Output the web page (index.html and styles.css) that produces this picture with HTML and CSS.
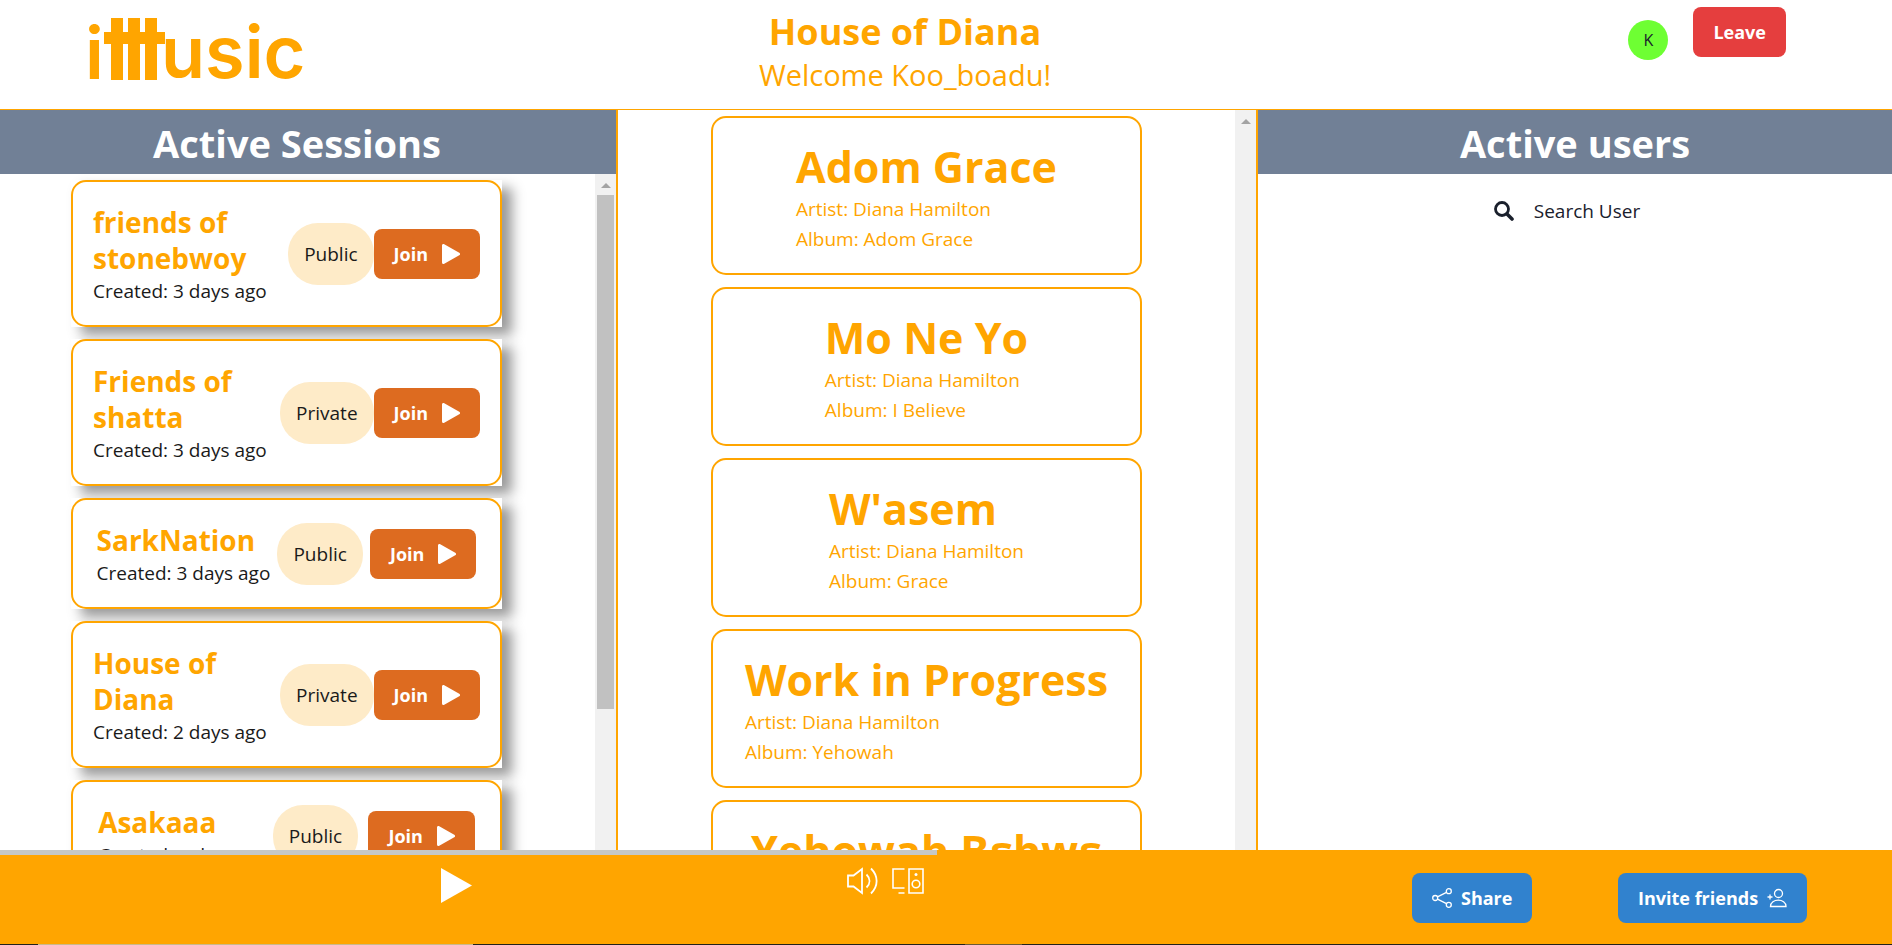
FILE: index.html
```html
<!DOCTYPE html>
<html lang="en">
<head>
<meta charset="utf-8">
<title>ittMusic - House of Diana</title>
<link rel="stylesheet" href="styles.css">
</head>
<body>
<svg class="symbols" aria-hidden="true">
  <symbol id="play" viewBox="0 0 18 20"><path d="M1.500 1.500v17L16.500 10z" fill="currentColor" stroke="currentColor" stroke-width="3" stroke-linejoin="round"/></symbol>
</svg>
<header class="topbar">
  <a class="logo" href="#" aria-label="Music home">
    <svg class="logo-art" width="218" height="72" viewBox="0 0 218 72" fill="currentColor" aria-hidden="true">
      <text class="logo-text" x="-3" y="62">i</text>
      <rect x="23" y="1" width="12" height="62"/>
      <rect x="40" y="1" width="12" height="62"/>
      <rect x="57" y="1" width="12" height="62"/>
      <rect x="16" y="15" width="61" height="12"/>
      <text class="logo-text" x="73" y="61">usic</text>
    </svg>
  </a>
  <div class="room">
    <h1 class="room-name">House of Diana</h1>
    <p class="welcome">Welcome Koo_boadu!</p>
  </div>
  <div class="account">
    <span class="avatar">K</span>
    <button class="btn btn-leave" type="button">Leave</button>
  </div>
</header>

<main class="columns">
  <section class="panel panel-sessions">
    <h2 class="panel-title">Active Sessions</h2>
    <div class="scroller">
      <div class="list">
        <article class="session"><div class="session-box">
          <div class="session-info"><h3 class="session-name">friends of stonebwoy</h3><p class="created">Created: 3 days ago</p></div>
          <span class="badge">Public</span>
          <button class="btn btn-join" type="button">Join<svg width="18" height="20"><use href="#play"/></svg></button>
        </div></article>
        <article class="session"><div class="session-box">
          <div class="session-info"><h3 class="session-name">Friends of shatta</h3><p class="created">Created: 3 days ago</p></div>
          <span class="badge">Private</span>
          <button class="btn btn-join" type="button">Join<svg width="18" height="20"><use href="#play"/></svg></button>
        </div></article>
        <article class="session"><div class="session-box">
          <div class="session-info"><h3 class="session-name">SarkNation</h3><p class="created">Created: 3 days ago</p></div>
          <span class="badge">Public</span>
          <button class="btn btn-join" type="button">Join<svg width="18" height="20"><use href="#play"/></svg></button>
        </div></article>
        <article class="session"><div class="session-box">
          <div class="session-info"><h3 class="session-name">House of Diana</h3><p class="created">Created: 2 days ago</p></div>
          <span class="badge">Private</span>
          <button class="btn btn-join" type="button">Join<svg width="18" height="20"><use href="#play"/></svg></button>
        </div></article>
        <article class="session"><div class="session-box">
          <div class="session-info"><h3 class="session-name">Asakaaa</h3><p class="created">Created: a day ago</p></div>
          <span class="badge">Public</span>
          <button class="btn btn-join" type="button">Join<svg width="18" height="20"><use href="#play"/></svg></button>
        </div></article>
      </div>
      <div class="scrollbar"><span class="scroll-up"></span><span class="scroll-thumb"></span></div>
    </div>
  </section>

  <section class="panel panel-songs">
    <div class="scroller">
      <div class="list">
        <article class="song"><div><h3 class="song-name">Adom Grace</h3><p class="song-meta">Artist: Diana Hamilton</p><p class="song-meta">Album: Adom Grace</p></div></article>
        <article class="song"><div><h3 class="song-name">Mo Ne Yo</h3><p class="song-meta">Artist: Diana Hamilton</p><p class="song-meta">Album: I Believe</p></div></article>
        <article class="song"><div><h3 class="song-name">W'asem</h3><p class="song-meta">Artist: Diana Hamilton</p><p class="song-meta">Album: Grace</p></div></article>
        <article class="song"><div><h3 class="song-name">Work in Progress</h3><p class="song-meta">Artist: Diana Hamilton</p><p class="song-meta">Album: Yehowah</p></div></article>
        <article class="song"><div><h3 class="song-name">Yehowah Bɛhwɛ</h3><p class="song-meta">Artist: Diana Hamilton</p><p class="song-meta">Album: Yehowah</p></div></article>
      </div>
      <div class="scrollbar"><span class="scroll-up"></span></div>
    </div>
  </section>

  <section class="panel panel-users">
    <h2 class="panel-title">Active users</h2>
    <button class="search" type="button">
      <svg width="20" height="20" viewBox="0 0 20 20" fill="none" stroke="currentColor" aria-hidden="true"><circle cx="8" cy="8" r="6.5" stroke-width="2.8"/><path d="M13 13l5 5" stroke-width="3.6" stroke-linecap="round"/></svg>
      Search User
    </button>
  </section>
</main>

<footer class="player">
  <div class="progress"><div class="progress-value" style="width:49.5%"></div></div>
  <div class="controls">
    <button class="icon-btn control-play" type="button" aria-label="Play"><svg width="31" height="35" viewBox="0 0 31 35" fill="currentColor"><path d="M0 0v35l31-17.500z"/></svg></button>
    <div class="outputs">
      <button class="icon-btn" type="button" aria-label="Volume"><svg width="31" height="28" viewBox="0 0 31 28" fill="none" stroke="currentColor" stroke-width="1.8"><path d="M1 8.500h5.500L15 2v24L6.500 19.500H1zM19.500 7.500c4 4 4 9 0 13M24 1.500c7.500 7.500 7.500 17.500 0 25"/></svg></button>
      <button class="icon-btn" type="button" aria-label="Devices"><svg width="32" height="28" viewBox="0 0 32 28" fill="none" stroke="currentColor" stroke-width="1.600"><path d="M12.500 2H1v19h11.500M6.500 26h6M17 2h14v24H17z"/><circle cx="24" cy="17" r="3.800"/><circle cx="24" cy="7.500" r="1.500" fill="currentColor" stroke="none"/></svg></button>
    </div>
    <button class="btn btn-share" type="button"><svg width="20" height="20" viewBox="0 0 20 20" fill="none" stroke="currentColor" stroke-width="1.300"><circle cx="3.200" cy="10" r="2.500"/><circle cx="16.800" cy="3.200" r="2.500"/><circle cx="16.800" cy="16.800" r="2.500"/><path d="M5.500 8.800l9-4.500M5.500 11.200l9 4.500"/></svg>Share</button>
    <button class="btn btn-invite" type="button">Invite friends<svg width="20" height="20" viewBox="0 0 20 20" fill="none" stroke="currentColor" stroke-width="1.300"><circle cx="11.500" cy="5.500" r="4"/><path d="M3.500 18.500c0-8.500 15.500-8.500 15.500 0zM0.500 9h5M3 6.500v5"/></svg></button>
  </div>
  <div class="edge"></div>
</footer>
</body>
</html>
```
FILE: styles.css
```css
* { box-sizing: border-box; margin: 0; padding: 0; }

body {
  display: flex;
  flex-direction: column;
  height: 100vh;
  overflow: hidden;
  font-family: "Open Sans", "Noto Sans", sans-serif;
  font-size: 19px;
  line-height: 30px;
  color: #1a202c;
  background: #fff;
}

button { font: inherit; color: inherit; border: 0; background: none; cursor: pointer; }
svg { display: block; flex: none; }
.symbols { position: absolute; width: 0; height: 0; }

.btn {
  display: inline-flex;
  align-items: center;
  justify-content: center;
  flex: none;
  height: 50px;
  padding: 0 20px;
  border-radius: 8px;
  color: #fff;
  font-size: 18px;
  font-weight: 700;
}

/* Header */
.topbar {
  display: grid;
  grid-template-columns: 602fr 606fr 684fr;
  height: 110px;
  flex: none;
  border-bottom: 1px solid #ffa500;
  color: #ffa500;
}
.logo { padding: 17px 0 0 88px; color: inherit; }
.logo-art { overflow: visible; }
.logo-text { font: 600 72px Inter, sans-serif; }
.room { padding-top: 10px; text-align: center; }
.room-name { font-size: 36px; line-height: 44px; }
.welcome { font-size: 29px; line-height: 42px; }
.account {
  display: flex;
  justify-content: flex-end;
  align-items: flex-start;
  gap: 25px;
  padding: 7px 106px 0 0;
}
.avatar {
  width: 40px;
  margin-top: 13px;
  border-radius: 50%;
  background: #6eff33;
  color: #1a202c;
  font-size: 16px;
  line-height: 40px;
  text-align: center;
}
.btn-leave { background: #e53e3e; }

/* Columns */
.columns {
  display: grid;
  grid-template-columns: 618fr 640fr 634fr;
  flex: 1;
  min-height: 0;
}
.panel { display: flex; flex-direction: column; min-height: 0; overflow: hidden; }
.panel-sessions, .panel-songs { border-right: 2px solid #ffa500; }
.panel-title {
  flex: none;
  background: #718096;
  color: #fff;
  font-size: 38px;
  line-height: 56px;
  padding: 5px 0 3px;
  text-align: center;
}
.panel-sessions .panel-title { padding-right: 22px; }
.scroller { display: flex; flex: 1; min-height: 0; }
.list {
  display: flex;
  flex-direction: column;
  align-items: center;
  gap: 12px;
  flex: 1;
  padding-top: 6px;
  overflow: hidden;
}
.panel-sessions .list { padding-right: 22px; }

.scrollbar {
  display: flex;
  flex-direction: column;
  align-items: center;
  width: 21px;
  background: #f1f1f1;
}
.scroll-up {
  margin: 9px 0 7px;
  border: 5px solid transparent;
  border-top: 0;
  border-bottom-color: #a3a3a3;
}
.scroll-thumb { width: 17px; height: 76%; background: #c1c1c1; }

/* Sessions */
.session { flex: none; width: 431px; background: #fff; box-shadow: 10px 8px 12px #999; }
.session-box {
  display: flex;
  align-items: center;
  justify-content: space-around;
  padding: 20px;
  border: 2px solid #ffa500;
  border-radius: 15px;
}
.session-info { padding-top: 2px; margin-bottom: -2px; }
.session-name { color: #ffa500; font-size: 28px; line-height: 36px; }
.created { line-height: 31px; color: #1a1a1a; }
.badge {
  flex: none;
  padding: 16px;
  border-radius: 30px;
  background: #feebc8;
  color: #1a1a1a;
}
.btn-join { gap: 14px; background: #dd6b20; }

/* Songs */
.song {
  display: flex;
  justify-content: center;
  flex: none;
  width: 431px;
  padding: 22px 20px 19px;
  border: 2px solid #ffa500;
  border-radius: 15px;
  color: #ffa500;
}
.song-name { font-size: 43px; line-height: 54px; white-space: nowrap; }

/* Users */
.search {
  display: flex;
  align-items: center;
  justify-content: center;
  gap: 20px;
  padding: 22px 16px 0 0;
  font-weight: 500;
}

/* Player */
.player { flex: none; background: #ffa500; color: #fff; }
.progress { height: 5px; }
.progress-value { height: 5px; background: #c5c8c5; }
.controls {
  display: grid;
  grid-template-columns: 441fr 406fr 565fr 206fr 274fr;
  align-items: start;
  justify-items: start;
  height: 89px;
}
.control-play { grid-column: 2; margin-top: 13px; }
.outputs { display: flex; gap: 14px; margin-top: 12px; }
.btn-share, .btn-invite { gap: 9px; margin-top: 18px; background: #3182ce; }
.edge {
  height: 1px;
  background: linear-gradient(90deg, #22221c 2%, #cbb98a 2%, #cbb98a 25%, #22221c 25%, #22221c 51%, #6b5a35 51%, #6b5a35 54%, #22221c 54%);
}
```
